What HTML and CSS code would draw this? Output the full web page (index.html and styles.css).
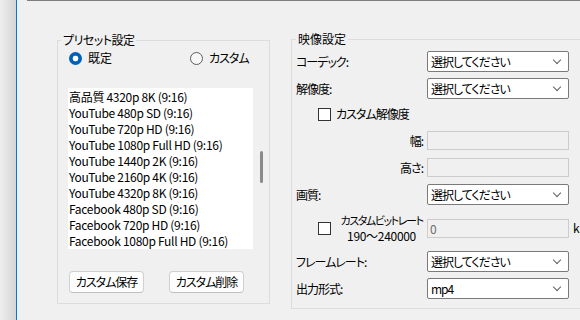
FILE: index.html
```html
<!DOCTYPE html>
<html lang="ja">
<head>
    <meta charset="UTF-8">
    <title>設定</title>
    <link rel="stylesheet" href="styles.css">
</head>
<body>
    <div class="strip"></div>
    <div class="edge"></div>
    <div class="content">
        <div class="topline"></div>
        <div class="groups">
            <fieldset class="group preset">
                <legend>プリセット設定</legend>
                <div class="radios">
                    <label class="opt first"><span class="radio on"></span>既定</label>
                    <label class="opt"><span class="radio"></span>カスタム</label>
                </div>
                <div class="listbox">
                    <ul class="items">
                        <li>高品質 4320p 8K (9:16)</li>
                        <li>YouTube 480p SD (9:16)</li>
                        <li>YouTube 720p HD (9:16)</li>
                        <li>YouTube 1080p Full HD (9:16)</li>
                        <li>YouTube 1440p 2K (9:16)</li>
                        <li>YouTube 2160p 4K (9:16)</li>
                        <li>YouTube 4320p 8K (9:16)</li>
                        <li>Facebook 480p SD (9:16)</li>
                        <li>Facebook 720p HD (9:16)</li>
                        <li>Facebook 1080p Full HD (9:16)</li>
                    </ul>
                    <div class="scroll"><div class="thumb"></div></div>
                </div>
                <div class="buttons">
                    <button class="btn">カスタム保存</button>
                    <button class="btn second">カスタム削除</button>
                </div>
            </fieldset>

            <fieldset class="group video">
                <legend>映像設定</legend>
                <div class="row r-codec">
                    <span class="label">コーデック:</span>
                    <div class="select">選択してください<span class="chev"></span></div>
                </div>
                <div class="row r-res">
                    <span class="label">解像度:</span>
                    <div class="select">選択してください<span class="chev"></span></div>
                </div>
                <div class="row r-check">
                    <span class="box"></span><span class="check-text">カスタム解像度</span>
                </div>
                <div class="row r-w">
                    <span class="label right">幅:</span>
                    <div class="input"></div>
                </div>
                <div class="row r-h">
                    <span class="label right">高さ:</span>
                    <div class="input"></div>
                </div>
                <div class="row r-quality">
                    <span class="label">画質:</span>
                    <div class="select">選択してください<span class="chev"></span></div>
                </div>
                <div class="row r-bitrate">
                    <span class="box"></span>
                    <div class="bitrate-text">
                        <span class="kata">カスタムビットレート</span>
                        <span>190〜240000</span>
                    </div>
                    <div class="input">0</div>
                    <span class="unit">kbps</span>
                </div>
                <div class="row r-fps">
                    <span class="label">フレームレート:</span>
                    <div class="select">選択してください<span class="chev"></span></div>
                </div>
                <div class="row r-format">
                    <span class="label">出力形式:</span>
                    <div class="select">mp4<span class="chev"></span></div>
                </div>
            </fieldset>
        </div>
    </div>
</body>
</html>
```

FILE: styles.css
```css
* {
    margin: 0;
    padding: 0;
    box-sizing: border-box;
}

body {
    display: flex;
    width: 580px;
    height: 320px;
    overflow: hidden;
    background-color: #f0f0f0;
    color: #000;
    font-family: "Noto Sans CJK JP", sans-serif;
    font-size: 12px;
    line-height: 16px;
    letter-spacing: -1px;
    font-feature-settings: "palt";
}

.strip {
    width: 16px;
    flex-shrink: 0;
    background: linear-gradient(to right, #efefef, #d5d5d5);
}

.edge {
    width: 1px;
    flex-shrink: 0;
    background-color: #0078d7;
}

.content {
    flex: 1;
    min-width: 0;
}

.topline {
    margin-left: 10px;
    border-top: 1px solid #7e7e7e;
}

.groups {
    display: flex;
    align-items: flex-start;
    padding-top: 30px;
    padding-left: 40px;
}

/* group boxes */
.group {
    border: 1px solid #dcdcdc;
    padding: 0;
    margin: 0;
    flex-shrink: 0;
}

.group legend {
    margin-left: 3px;
    padding: 0 2px;
    line-height: 16px;
    letter-spacing: -0.5px;
}

.preset {
    width: 213px;
    height: 272px;
    margin-top: 1px;
}

.video {
    width: 320px;
    height: 278px;
    margin-left: 21px;
}

.video legend {
    margin-left: 4px;
    letter-spacing: 0;
}

/* radios */
.radios {
    display: flex;
    height: 16px;
    margin-top: 2px;
    padding-left: 11px;
}

.opt {
    display: flex;
    align-items: center;
    gap: 6px;
}

.opt.first {
    width: 121px;
    letter-spacing: 0;
}

.radio {
    width: 13px;
    height: 13px;
    border: 1px solid #5d5d5d;
    border-radius: 50%;
    background-color: #f7f7f7;
}

.radio.on {
    border: none;
    background: radial-gradient(circle, #fff 0 2.6px, #005fb8 3.2px);
}

/* list */
.listbox {
    display: flex;
    height: 161px;
    margin-top: 22px;
    margin-left: 10px;
}

.items {
    list-style: none;
    width: 185px;
    background-color: #fff;
    padding-top: 1px;
    padding-left: 1px;
    overflow: hidden;
}

.items li {
    height: 16px;
    white-space: nowrap;
    letter-spacing: -0.3px;
}

.scroll {
    width: 16px;
    padding-top: 63px;
    padding-left: 7px;
}

.thumb {
    width: 3px;
    height: 32px;
    border-radius: 2px;
    background-color: #8a8a8a;
}

/* buttons */
.buttons {
    display: flex;
    margin-top: 22px;
    padding-left: 11px;
}

.btn {
    width: 75px;
    height: 22px;
    border: 1px solid #d0d0d0;
    border-bottom-color: #c0c0c0;
    border-radius: 4px;
    background-color: #fdfdfd;
    font: inherit;
    letter-spacing: -1px;
    font-feature-settings: "palt";
    color: #000;
}

.btn.second {
    margin-left: 25px;
}

/* video rows */
.row {
    display: flex;
    align-items: center;
    padding-left: 4px;
    height: 21px;
}

.r-codec { margin-top: 4px; }
.r-res { margin-top: 6px; }
.r-check { margin-top: 6px; height: 18px; }
.r-w { margin-top: 8px; height: 19px; }
.r-h { margin-top: 8px; height: 19px; }
.r-quality { margin-top: 7px; }
.r-bitrate { margin-top: 7px; height: 32px; }
.r-fps { margin-top: 7px; }
.r-format { margin-top: 6px; }

.label {
    width: 131px;
    flex-shrink: 0;
}

.label.right {
    text-align: right;
    padding-right: 4px;
}

.select {
    position: relative;
    width: 142px;
    height: 21px;
    border: 1px solid #7a7a7a;
    border-radius: 2px;
    background-color: #fff;
    padding-left: 3px;
    line-height: 19px;
    flex-shrink: 0;
}

.chev {
    position: absolute;
    right: 8px;
    top: 5px;
    width: 6px;
    height: 6px;
    border-right: 1px solid #606060;
    border-bottom: 1px solid #606060;
    transform: rotate(45deg);
}

.input {
    width: 142px;
    height: 19px;
    border: 1px solid #cccccc;
    background-color: #f0f0f0;
    color: #6d6d6d;
    padding-left: 2px;
    line-height: 17px;
    letter-spacing: 0;
    flex-shrink: 0;
}

.box {
    width: 13px;
    height: 13px;
    border: 1px solid #333;
    background-color: #fff;
    margin-left: 22px;
    flex-shrink: 0;
}

.check-text {
    margin-left: 5px;
}

.bitrate-text {
    display: flex;
    flex-direction: column;
    align-items: center;
    width: 91px;
    margin-left: 5px;
    white-space: nowrap;
    letter-spacing: -0.3px;
    flex-shrink: 0;
}

.bitrate-text .kata {
    font-size: 11px;
    letter-spacing: -1.4px;
}

.unit {
    margin-left: 4px;
    white-space: nowrap;
    letter-spacing: 0;
}
```
